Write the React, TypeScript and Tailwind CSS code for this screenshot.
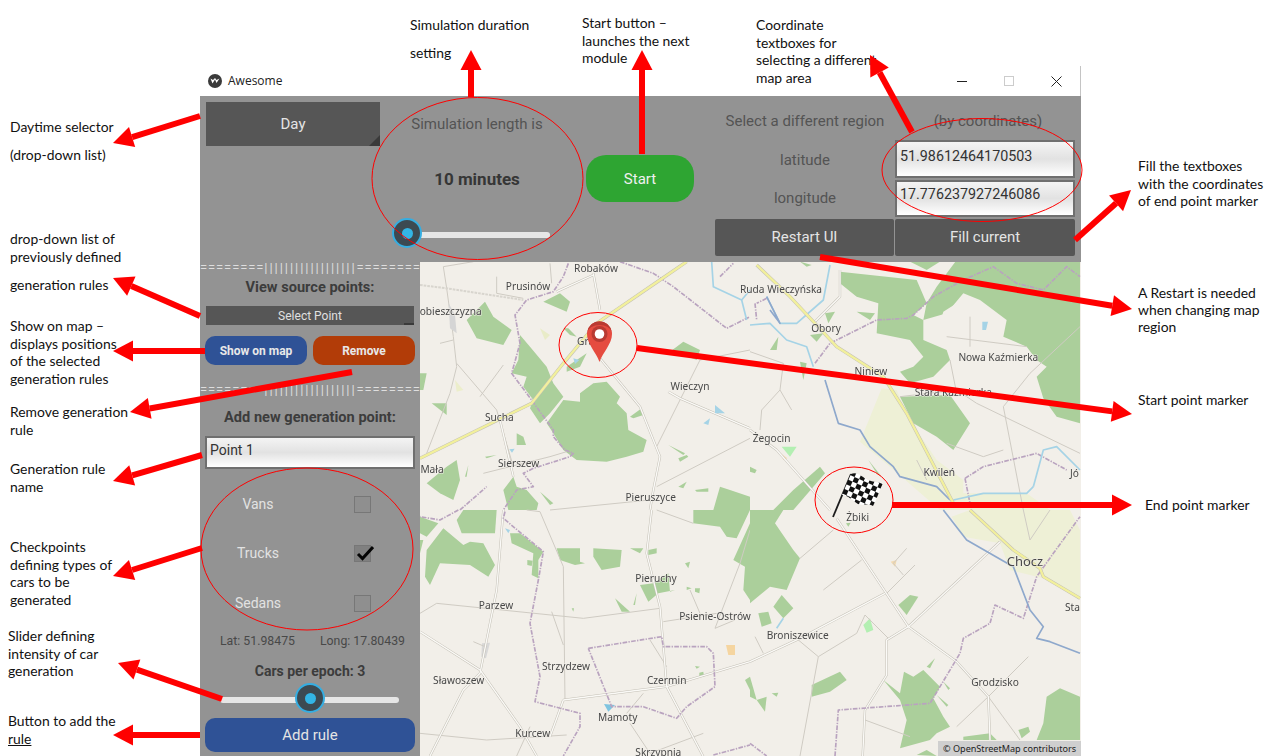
import type { ReactNode } from "react";

const FOREST = "#abcf9b";

function Forest({ d }: { d: string[] }) {
  return (
    <g fill={FOREST}>
      {d.map((p, i) => (
        <polygon key={i} points={p} />
      ))}
    </g>
  );
}

// two layer line, grey casing + white or yellow core
function Roads({ d, core, w }: { d: string[]; core: string; w: number }) {
  return (
    <g fill="none" strokeLinejoin="round">
      {d.map((p, i) => (
        <polyline key={i} points={p} stroke="#c4c0b6" strokeWidth={w + 3} />
      ))}
      {d.map((p, i) => (
        <polyline key={i} points={p} stroke={core} strokeWidth={w} />
      ))}
    </g>
  );
}

function Lines({ d, color, w, dash }: { d: string[]; color: string; w: number; dash?: string }) {
  return (
    <g fill="none" stroke={color} strokeWidth={w} strokeDasharray={dash} strokeLinejoin="round">
      {d.map((p, i) => (
        <polyline key={i} points={p} />
      ))}
    </g>
  );
}

function Label({ x, y, children, size = 30.5, anchor = "middle" }: { x: number; y: number; children: string; size?: number; anchor?: "middle" | "end" | "start" }) {
  return (
    <text x={x} y={y + size * 0.36} fontSize={size} textAnchor={anchor} fill="#484848" stroke="#f2efe9" strokeWidth={3} paintOrder="stroke" fontFamily="'Noto Sans', sans-serif">
      {children}
    </text>
  );
}

const THIN = "#cfcbc3";
const BOUNDARY = "#b9a3bf";
const RIVER = "#a5d3e6";
const RIVER_DARK = "#8ea8cc";
const MINOR = "#fbfaf7";
const MAIN = "#f2f09c";

function MapTileA() {
  return (
    <g transform="translate(420 260) scale(0.33333)">
      <Forest
        d={[
          "480,400 520,370 560,365 600,410 590,430 620,460 625,510 680,540 670,575 620,590 560,605 470,600 430,570 400,520 380,490 430,420 480,425",
          "300,225 330,260 380,320 400,370 430,410 390,460 360,490 330,445 340,420 310,380 320,350 275,340 295,300",
          "140,180 195,125 220,170 275,210 250,255 170,235",
          "370,125 420,100 450,125 440,155",
          "430,205 445,205 470,230 450,225",
          "440,320 500,280 480,320 440,335",
          "750,275 790,245 840,270 830,300 790,285",
          "20,670 80,620 110,600 120,660 100,720 60,700",
          "0,340 20,340 10,390 0,390",
          "35,430 80,430 80,465",
          "290,520 310,530 318,555 290,555",
          "250,690 280,650 290,680 320,690 355,730 350,750 265,750",
          "880,750 900,680 930,690 990,710 990,750",
          "825,690 865,685 865,695 830,695",
          "135,650 145,615 140,650",
          "195,590 230,585 200,595",
          "630,470 665,445 670,465 640,475",
          "745,555 795,580 790,585",
          "775,595 800,585 805,590 780,605",
          "360,695 400,730 390,735",
          "775,680 800,665 790,685",
        ]}
      />
      <polygon points="360,205 390,225 375,240" fill="#e9ecc8" />
      <polygon points="105,360 130,390 110,395" fill="#eceecb" />
      <Lines
        d={[
          "80,85 100,230 110,320 90,400 20,580",
          "110,310 230,450 280,620",
          "840,300 780,420 710,560",
          "990,535 710,680",
          "230,50 230,100 310,115",
          "390,10 395,70",
          "70,20 80,85",
          "70,20 160,5",
          "190,640 390,590 440,575",
          "60,250 100,240",
          "180,410 250,315",
          "390,750 690,720",
          "840,300 990,270",
        ]}
        color={THIN}
        w={3}
      />
      <Roads d={["520,40 540,150", "540,295 660,440 720,590 700,690 690,750", "780,415 990,505", "745,395 780,415", "410,95 520,45", "240,480 280,650"]} core={MINOR} w={4} />
      <Lines d={["0,75 80,85 310,120"]} color="#d8d5ce" w={6} dash="8 3" />
      <Lines
        d={[
          "445,10 430,50 400,95 320,120 285,165 300,250 275,340 320,400 400,510 400,530 435,570 460,580 450,590 340,625 310,640 340,680 290,690 250,750",
          "600,5 700,40 760,80 920,205 990,170",
          "900,50 940,10",
          "120,750 200,680",
        ]}
        color={BOUNDARY}
        w={5}
        dash="14 4 4 4"
      />
      <Lines d={["875,5 880,80 965,120 980,180", "965,120 990,90"]} color={RIVER} w={5} />
      <polygon points="885,435 915,460 885,460" fill={RIVER} />
      <polygon points="850,490 870,475 865,495" fill={RIVER} />
      <polygon points="460,295 478,300 465,312" fill={RIVER} />
      <polygon points="268,568 284,566 276,578" fill={RIVER} />
      <polygon points="86,130 105,165 110,220 90,205" fill="#d5d5d5" />
      <Roads d={["0,595 335,430 430,310 530,190 720,60 800,5"]} core={MAIN} w={7} />
      <Label x={528} y={25}>Robaków</Label>
      <Label x={324} y={78}>Prusinów</Label>
      <Label x={185} y={155} anchor="end">obieszczyzna</Label>
      <Label x={497} y={243}>Gra</Label>
      <Label x={810} y={378}>Wieczyn</Label>
      <Label x={238} y={473}>Sucha</Label>
      <Label x={296} y={611}>Sierszew</Label>
      <Label x={36} y={628}>Mała</Label>
      <Label x={692} y={713}>Pieruszyce</Label>
    </g>
  );
}

function MapTileB() {
  return (
    <g transform="translate(750 260) scale(0.33333)">
      <polygon points="330,545 395,385 440,390 480,480 560,600 640,660 640,700 830,700 900,750 570,750 420,620" fill="#eef0d6" />
      <Forest
        d={[
          "620,0 990,0 990,490 920,470 880,415 860,350 890,320 860,300 830,260 760,230 770,180 690,120 640,100 590,160 520,180 530,130 560,80",
          "270,35 500,60 530,130 490,165 520,180 520,240 590,270 600,300 550,350 480,370 450,335 490,320 520,290 480,240 380,220 385,130 320,110 270,70",
          "450,410 600,405 660,490 610,570 560,530 490,490",
          "150,5 185,15 170,20",
          "480,5 570,5 530,30",
          "60,270 85,230 80,270",
          "180,225 220,220 200,245",
          "70,750 130,690 210,620 225,640 130,750",
          "0,620 20,630 15,640 0,635",
          "225,160 255,155 235,190",
          "150,305 170,310 160,360",
          "320,155 375,160 360,180",
          "355,600 395,650 380,640",
        ]}
      />
      <polygon points="95,560 140,560 120,590" fill="#b3efb2" />
      <polygon points="92,580 112,595 100,600" fill="#f2d9b0" />
      <g fill="#f2efe9">
        <polygon points="695,185 715,185 710,210 697,210" />
        <polygon points="580,155 620,130 640,190 600,240 570,190" />
        <polygon points="640,130 680,130 670,170 645,170" />
      </g>
      <polygon points="697,185 714,185 708,210 697,210" fill={RIVER} />
      <Lines
        d={[
          "0,275 100,310 90,390 35,450 30,510",
          "90,390 125,450",
          "760,440 820,750",
          "760,440 840,340 990,200",
          "680,430 990,580",
          "450,410 620,390 680,430",
          "600,300 620,400",
          "590,550 700,590 760,570",
          "660,170 660,260",
          "590,230 830,260",
          "500,600 530,660",
        ]}
        color={THIN}
        w={3}
      />
      <Roads d={["0,510 80,570 240,750", "270,30 270,110 190,190"]} core={MINOR} w={4} />
      <Lines
        d={[
          "15,130 20,180",
          "50,115 20,130",
          "195,310 240,250 280,230 380,180 470,175 490,165 550,110 640,60 730,20 800,70 880,90 950,20 990,50",
          "645,655 700,620 860,580 950,630",
          "645,655 660,730",
        ]}
        color={BOUNDARY}
        w={5}
        dash="14 4 4 4"
      />
      <Lines d={["0,195 60,190 110,240 170,260 190,320", "850,680 880,570 920,560 990,630", "610,720 700,700 830,700 850,680", "240,15 220,120 140,190 90,190 50,110"]} color={RIVER} w={5} />
      <Lines d={["225,360 265,490 330,510 360,560 430,620 450,650 560,680 600,720", "50,110 90,190 60,150"]} color={RIVER_DARK} w={5} />
      <Roads d={["20,15 120,110 260,260 400,350 470,460 610,730"]} core={MAIN} w={7} />
      <Label x={93} y={88}>Ruda Wieczyńska</Label>
      <Label x={228} y={204}>Obory</Label>
      <Label x={363} y={334}>Niniew</Label>
      <Label x={745} y={292}>Nowa Kaźmierka</Label>
      <Label x={610} y={396}>Stara Kaźmierka</Label>
      <Label x={65} y={535}>Żegocin</Label>
      <Label x={568} y={637}>Kwileń</Label>
      <Label x={960} y={640} anchor="start">Jó</Label>
    </g>
  );
}

function MapTileC() {
  return (
    <g transform="translate(420 510) scale(0.33333)">
      <Forest
        d={[
          "110,30 130,0 230,0 225,70 125,70",
          "15,200 20,120 70,55 130,105 150,95 190,100 225,165 205,200 150,165 60,160 30,225",
          "270,70 300,70 370,125 355,150 355,205 335,195 340,130 275,100",
          "410,115 480,115 480,155 495,160 465,165 420,150",
          "520,115 605,120 600,170 545,180 520,140",
          "630,115 670,115 660,130",
          "685,120 710,115 710,130 685,135",
          "660,225 700,220 745,190 750,245 765,240 715,250 685,275",
          "585,265 630,305 605,305",
          "640,285 650,250 645,285",
          "795,160 810,155 805,175",
          "820,0 990,0 950,85 920,80 900,50 820,40",
          "940,150 990,40 990,270 970,240 975,170",
          "0,20 55,40 20,80 0,70",
          "0,90 10,90 0,130",
          "975,510 990,500 990,540",
          "800,230 815,235 800,240",
          "825,235 840,235 838,250 825,245",
          "825,468 840,470 830,476",
          "838,488 850,485 852,500 838,500",
          "322,150 338,152 335,168 322,165",
          "455,295 462,295 460,305",
        ]}
      />
      <polygon points="918,405 945,405 945,435 925,435" fill="#f5d5a0" />
      <polygon points="552,582 585,585 565,605" fill="#7fc4e0" />
      <polygon points="255,55 270,60 265,70" fill={RIVER} />
      <polygon points="186,400 210,398 198,445 184,440" fill="#d8d8d8" />
      <Lines
        d={[
          "320,0 360,5 430,170 435,570",
          "0,310 50,280 490,325 720,295",
          "0,670 200,690 440,675",
          "395,305 430,405",
          "730,335 890,310",
          "885,355 960,160 990,60",
          "885,355 945,330",
          "810,240 840,310",
          "630,640 690,730",
          "670,550 620,610",
          "690,390 740,470",
          "710,0 820,40",
          "690,730 850,670",
          "290,738 330,650",
          "160,395 195,410",
        ]}
        color={THIN}
        w={3}
      />
      <Roads d={["695,0 680,130 720,290 740,530 850,740", "0,365 180,480 300,650 350,738", "250,0 230,240 180,490 130,540 30,738", "430,570 660,540 740,530 990,455", "430,570 390,680"]} core={MINOR} w={4} />
      <Lines
        d={[
          "255,5 250,25 370,125 355,210 330,340 360,500 345,575 480,610 480,650 430,738",
          "505,415 725,380 730,410 860,410 880,430 885,530 800,590 770,625 670,590 575,590 505,415",
          "115,0 60,30 0,20",
          "880,735 990,705",
        ]}
        color={BOUNDARY}
        w={5}
        dash="14 4 4 4"
      />
      <Label x={708} y={205}>Pieruchy</Label>
      <Label x={228} y={287}>Parzew</Label>
      <Label x={885} y={320}>Psienie-Ostrów</Label>
      <Label x={438} y={470}>Strzydzew</Label>
      <Label x={116} y={512}>Sławoszew</Label>
      <Label x={740} y={511}>Czermin</Label>
      <Label x={593} y={622}>Mamoty</Label>
      <Label x={338} y={669}>Kurcew</Label>
      <Label x={715} y={726}>Skrzypnia</Label>
    </g>
  );
}

function MapTileD() {
  return (
    <g transform="translate(750 510) scale(0.33333)">
      <polygon points="605,20 660,0 960,0 990,60 990,270 900,210 780,180 750,100 640,80" fill="#eef0d6" />
      <Forest
        d={[
          "0,0 100,0 75,40 130,120 150,145 110,240 60,230 0,280",
          "70,290 95,255 130,295 100,325",
          "25,310 55,305 65,340 35,350",
          "445,285 480,255 505,260 470,315",
          "462,485 490,500 520,480 570,530 550,565 580,620 600,650 560,670 540,690 450,715 470,630 450,570 400,510 450,550",
          "185,525 270,485 290,510 240,545 185,560",
          "880,640 890,560 930,535 990,560 990,690 860,690",
          "805,660 835,650 840,665 815,685",
          "530,470 555,445 540,475",
          "640,680 720,670 740,690 640,690",
          "500,735 530,720 560,738",
          "0,500 20,570 0,560",
          "20,570 50,560 45,605",
          "65,550 85,548 80,560",
          "580,515 600,535 595,540",
          "560,555 595,585 590,590",
          "288,40 302,38 295,50",
        ]}
      />
      <polygon points="340,345 360,325 370,360 350,368" fill="#b3efb2" />
      <polygon points="422,155 440,150 435,170" fill="#f2d9b0" />
      <Lines
        d={[
          "150,145 250,60",
          "220,240 335,150",
          "410,250 495,165",
          "430,160 470,115",
          "430,160 460,195",
          "145,390 205,440 320,370 345,315 415,385",
          "205,440 150,738",
          "15,380 40,430",
          "620,650 715,560 810,690",
          "715,560 835,440",
          "345,630 480,680",
          "820,0 840,90",
          "900,0 840,90",
        ]}
        color={THIN}
        w={3}
      />
      <Roads d={["260,25 475,350 620,455 715,560 720,690", "475,350 750,95", "0,455 150,385 405,250", "475,350 410,390 410,495 345,600 338,738"]} core={MINOR} w={4} />
      <Lines
        d={[
          "255,738 265,600 540,580 630,430 640,385 720,340 735,285 820,325 860,200 910,130 990,20",
          "0,700 50,738",
        ]}
        color={BOUNDARY}
        w={5}
        dash="14 4 4 4"
      />
      <Lines d={["580,0 650,90 790,170 840,300 880,350 860,385 900,395 990,430"]} color={RIVER_DARK} w={5} />
      <Lines d={["80,355 100,325"]} color={RIVER} w={5} />
      <Roads d={["660,0 790,120 870,175 880,200 990,265"]} core={MAIN} w={7} />
      <Label x={323} y={22}>Żbiki</Label>
      <Label x={825} y={155} size={39}>Chocz</Label>
      <Label x={143} y={377}>Broniszewice</Label>
      <Label x={735} y={516}>Grodzisko</Label>
      <Label x={945} y={293} anchor="start">Sta</Label>
    </g>
  );
}

function Arrow({ x1, y1, x2, y2 }: { x1: number; y1: number; x2: number; y2: number }) {
  const len = Math.hypot(x2 - x1, y2 - y1);
  const ux = (x2 - x1) / len;
  const uy = (y2 - y1) / len;
  const bx = x2 - ux * 20;
  const by = y2 - uy * 20;
  return (
    <g fill="#ff0000">
      <line x1={x1} y1={y1} x2={bx} y2={by} stroke="#ff0000" strokeWidth={6} />
      <polygon points={`${x2},${y2} ${bx - uy * 10.5},${by + ux * 10.5} ${bx + uy * 10.5},${by - ux * 10.5}`} />
    </g>
  );
}

const ARROWS = [
  [200, 116, 113, 143],
  [200, 316, 113, 278],
  [205, 351, 113, 351],
  [352, 372, 130, 412],
  [202, 455, 113, 481],
  [202, 548, 113, 576],
  [222, 699, 118, 663],
  [200, 735, 113, 735],
  [471, 97, 471, 50],
  [642, 154, 642, 50],
  [912, 132, 870, 55],
  [1075, 240, 1131, 190],
  [820, 257, 1132, 309],
  [637, 348, 1132, 414],
  [892, 505, 1132, 505],
];

function Overlay() {
  return (
    <svg className="absolute left-0 top-0 pointer-events-none" width={1271} height={756}>
      {/* start marker */}
      <path d="M599.5 362 C596 352 587 344 587 334 A12.5 12.5 0 0 1 612 334 C612 344 603 352 599.5 362 Z" fill="#e54b3f" />
      <path d="M587.3 332 A12.3 12.3 0 0 1 611.7 332 A12.3 8 0 0 0 587.3 332 Z" fill="#b93a32" />
      <circle cx={599.5} cy={334} r={8} fill="#b93a32" />
      <circle cx={599.5} cy={334} r={4.8} fill="#ffffff" />
      {/* end marker */}
      <line x1={833} y1={517} x2={851} y2={474} stroke="#1c1c1c" strokeWidth={1.8} />
      <defs>
        <pattern id="checks" width={10} height={10} patternUnits="userSpaceOnUse" patternTransform="rotate(24 850 475)">
          <rect width={10} height={10} fill="#ffffff" />
          <rect width={5} height={5} fill="#111111" />
          <rect x={5} y={5} width={5} height={5} fill="#111111" />
        </pattern>
      </defs>
      <path d="M851 474 C857 471 862 477 868 480 C873 482 878 482 883 483 C879 491 877 499 873 506 C868 503 863 506 858 504 C853 501 848 495 842 495 Z" fill="url(#checks)" />
      {ARROWS.map((a, i) => (
        <Arrow key={i} x1={a[0]} y1={a[1]} x2={a[2]} y2={a[3]} />
      ))}
      <g fill="none" stroke="#ff0000" strokeWidth={1}>
        <ellipse cx={477.5} cy={178.5} rx={105.5} ry={81} />
        <ellipse cx={982} cy={170} rx={100} ry={51.5} />
        <ellipse cx={307} cy={549} rx={106} ry={81} />
        <ellipse cx={598} cy={345} rx={39} ry={32.5} />
        <ellipse cx={854} cy={500} rx={39} ry={33} />
      </g>
    </svg>
  );
}

function Slider({ thumbClass, trackClass }: { thumbClass: string; trackClass: string }) {
  return (
    <div className="relative h-full w-full">
      <div className={`absolute h-[6px] rounded-sm bg-[#e6e6e6] ${trackClass}`} />
      <div className={`absolute flex h-[30px] w-[30px] items-center justify-center rounded-full border-2 border-[#35aee2] bg-[#3c4a52] ${thumbClass}`}>
        <div className="h-[11px] w-[11px] rounded-full bg-[#33b5e5]" />
      </div>
    </div>
  );
}

function Separator() {
  return (
    <div className="flex h-[12px] items-center justify-between whitespace-nowrap font-['Roboto',sans-serif] text-[13px] leading-[12px] text-[#dedede]">
      <span className="tracking-[0.9px]">========</span>
      <span className="tracking-[1.95px]">||||||||||||||||||</span>
      <span className="tracking-[0.9px]">========</span>
    </div>
  );
}

function TextBox({ value, className }: { value: string; className: string }) {
  return (
    <div className={`border-2 border-[#6f6f6f] bg-gradient-to-b from-[#f4f4f4] via-[#e2e2e2] to-white pl-[3px] text-[#333333] ${className}`}>
      {value}
    </div>
  );
}

function VehicleRow({ label, checked }: { label: string; checked?: boolean }) {
  return (
    <div className="grid h-[30px] grid-cols-[116px_92px] items-center">
      <span className="text-center text-[14px] text-[#e2e2e2]">{label}</span>
      <div className={`relative mx-auto h-[17px] w-[17px] border border-[#777777] ${checked ? "bg-[#808080]" : "bg-[#8f8f8f]"}`}>
        {checked && (
          <svg className="absolute -left-[1px] -top-[4px] blur-[0.4px]" width={20} height={20} viewBox="0 0 20 20">
            <path d="M4 12 L8.5 16.5 L19 5" fill="none" stroke="#050505" strokeWidth={3} />
          </svg>
        )}
      </div>
    </div>
  );
}

function Annotation({ className, children }: { className: string; children: ReactNode }) {
  return <div className={`absolute whitespace-nowrap font-['Lato',sans-serif] text-[13.9px] text-[#111111] ${className}`}>{children}</div>;
}

function Annotations() {
  return (
    <>
      <Annotation className="left-[10px] top-[113px] leading-[28px]">Daytime selector<br />(drop-down list)</Annotation>
      <Annotation className="left-[10px] top-[230px] leading-[17.5px]">drop-down list of<br />previously defined<div className="mt-[11px]">generation rules</div></Annotation>
      <Annotation className="left-[10px] top-[317px] leading-[17.6px]">Show on map –<br />displays positions<br />of the selected<br />generation rules</Annotation>
      <Annotation className="left-[10px] top-[403px] leading-[17.5px]">Remove generation<br />rule</Annotation>
      <Annotation className="left-[10px] top-[460px] leading-[17.5px]">Generation rule<br />name</Annotation>
      <Annotation className="left-[10px] top-[538px] leading-[17.6px]">Checkpoints<br />defining types of<br />cars to be<br />generated</Annotation>
      <Annotation className="left-[8px] top-[627px] leading-[17.5px]">Slider defining<br />intensity of car<br />generation</Annotation>
      <Annotation className="left-[8px] top-[712px] leading-[18px]">Button to add the<br /><span className="underline">rule</span></Annotation>
      <Annotation className="left-[410px] top-[11px] leading-[28px]">Simulation duration<br />setting</Annotation>
      <Annotation className="left-[582px] top-[14px] leading-[17.5px]">Start button –<br />launches the next<br />module</Annotation>
      <Annotation className="left-[756px] top-[16px] leading-[17.6px]">Coordinate<br />textboxes for<br />selecting a different<br />map area</Annotation>
      <Annotation className="left-[1138px] top-[157px] leading-[17.5px]">Fill the textboxes<br />with the coordinates<br />of end point marker</Annotation>
      <Annotation className="left-[1138px] top-[284px] leading-[17.2px]">A Restart is needed<br />when changing map<br />region</Annotation>
      <Annotation className="left-[1138px] top-[391px] leading-[18px]">Start point marker</Annotation>
      <Annotation className="left-[1145px] top-[496px] leading-[18px]">End point marker</Annotation>
    </>
  );
}

function TitleBar() {
  return (
    <div className="flex h-[30px] items-center border-r border-[#c4c4c4] bg-white pl-[8px] font-['Open_Sans',sans-serif] text-[12px] text-[#222222]">
      <div className="flex h-[14px] w-[14px] items-center justify-center rounded-full bg-[#3a3a3a]">
        <svg width={10} height={8} viewBox="0 0 10 8">
          <path d="M0.5 1.5 L2.5 6.5 L5 2.5 L6.5 6 L9.5 1.5 L6.5 3 L5 1 L3 3 Z" fill="#ffffff" />
        </svg>
      </div>
      <span className="ml-[6px]">Awesome</span>
      <div className="ml-auto flex items-center">
        <svg width={47} height={30} viewBox="0 0 47 30"><line x1={18} y1={15.5} x2={28} y2={15.5} stroke="#222222" /></svg>
        <svg width={47} height={30} viewBox="0 0 47 30"><rect x={18.5} y={10.5} width={9} height={9} fill="none" stroke="#cccccc" /></svg>
        <svg width={47} height={30} viewBox="0 0 47 30"><path d="M18.5 10.5 L28.5 20.5 M28.5 10.5 L18.5 20.5" stroke="#222222" /></svg>
      </div>
    </div>
  );
}

function Toolbar() {
  return (
    <div className="flex h-[166px] bg-[#939393]">
      <div className="w-[186px] pl-[6px] pt-[6px]">
        <div className="relative flex h-[44px] w-[174px] items-center justify-center bg-[#565656] text-[15px] text-[#e4e4e4]">
          Day
          <div className="absolute bottom-0 right-0 h-0 w-0 border-b-[11px] border-l-[11px] border-b-[#3a3a3a] border-l-transparent" />
        </div>
      </div>
      <div className="flex w-[182px] flex-col items-center">
        <div className="mt-[17px] h-[22px] text-[15px] leading-[22px] text-[#545454]">Simulation length is</div>
        <div className="mt-[32px] h-[24px] text-[17px] font-bold leading-[24px] text-[#363636]">10 minutes</div>
        <div className="mt-[27px] h-[30px] w-full">
          <Slider thumbClass="left-[6px] top-0" trackClass="left-[30px] right-[18px] top-[14px]" />
        </div>
      </div>
      <button className="ml-[18px] mt-[59px] h-[47px] w-[108px] rounded-[20px] bg-[#2ea532] pt-[1px] text-[15px] text-[#f0f0f0]">Start</button>
      <div className="ml-[21px] grid w-[360px] grid-cols-[180px_180px] grid-rows-[42px_38px_37px_37px] gap-y-[2px] text-[15px] text-[#545454]">
        <div className="self-end pb-[7px] text-center leading-[20px]">Select a different region</div>
        <div className="self-end pb-[7px] pl-[6px] text-center leading-[20px]">(by coordinates)</div>
        <div className="flex items-center justify-center pt-[3px]">latitude</div>
        <TextBox value="51.98612464170503" className="text-[14.3px] leading-[28px]" />
        <div className="flex items-center justify-center">longitude</div>
        <TextBox value="17.776237927246086" className="text-[14.3px] leading-[25px]" />
        <button className="mr-[1px] rounded-[2px] bg-[#565656] text-[#e4e4e4]">Restart UI</button>
        <button className="rounded-[2px] bg-[#565656] text-[#e4e4e4]">Fill current</button>
      </div>
    </div>
  );
}

function SidePanel() {
  return (
    <div className="flex w-[220px] shrink-0 flex-col bg-[#939393]">
      <Separator />
      <div className="mt-[3px] h-[20px] text-center text-[14.6px] font-bold leading-[20px] text-[#3c3c3c]">View source points:</div>
      <div className="relative mx-[6px] mt-[9px] flex h-[19px] items-center justify-center bg-[#565656] text-[12px] text-[#e0e0e0]">
        Select Point
        <div className="absolute bottom-0 right-0 h-[2px] w-[10px] bg-[#3a3a3a]" />
      </div>
      <div className="mx-[5px] mt-[11px] flex h-[29px] justify-between text-[12px] font-bold">
        <button className="w-[102px] rounded-[10px] bg-[#2f5296] text-[#e8e8e8]">Show on map</button>
        <button className="w-[102px] rounded-[10px] bg-[#b23c08] text-[#e8e8e8]">Remove</button>
      </div>
      <div className="mt-[19px]"><Separator /></div>
      <div className="mt-[11px] h-[20px] text-center text-[14.6px] font-bold leading-[20px] text-[#3c3c3c]">Add new generation point:</div>
      <TextBox value="Point 1" className="mx-[5px] mt-[9px] h-[33px] text-[14px] leading-[24px]" />
      <div className="mt-[20px]"><VehicleRow label="Vans" /></div>
      <div className="mt-[19px]"><VehicleRow label="Trucks" checked /></div>
      <div className="mt-[20px]"><VehicleRow label="Sedans" /></div>
      <div className="mt-[15px] flex h-[16px] text-[12.3px] leading-[16px] text-[#484848]">
        <span className="ml-[20px]">Lat: 51.98475</span>
        <span className="ml-[25px]">Long: 17.80439</span>
      </div>
      <div className="mt-[13px] h-[18px] text-center text-[14px] font-bold leading-[18px] text-[#3c3c3c]">Cars per epoch: 3</div>
      <div className="mt-[3px] h-[30px]">
        <Slider thumbClass="left-[95px] top-0" trackClass="left-[20px] right-[21px] top-[14px]" />
      </div>
      <button className="mx-[5px] mt-[5px] h-[34px] rounded-[10px] bg-[#2f5296] text-[15px] text-[#e4e4e4]">Add rule</button>
    </div>
  );
}

function MapView() {
  return (
    <div className="relative flex-1 overflow-hidden bg-[#f2efe9]">
      <svg className="block blur-[0.6px]" width={661} height={494} viewBox="420 262 661 494">
        <rect x={420} y={262} width={661} height={494} fill="#f2efe9" />
        <MapTileA />
        <MapTileB />
        <MapTileC />
        <MapTileD />
      </svg>
      <div className="absolute bottom-0 right-0 h-[15px] w-[143px] whitespace-nowrap bg-[#cfcfcf] pl-[5px] font-['Noto_Sans',sans-serif] text-[9.1px] leading-[15px] text-[#222222]">
        © OpenStreetMap contributors
      </div>
    </div>
  );
}

export default function App() {
  return (
    <div className="relative h-[756px] w-[1271px] overflow-hidden bg-white font-['Roboto',sans-serif]">
      <div className="absolute left-[200px] top-[66px] flex h-[690px] w-[881px] flex-col">
        <TitleBar />
        <Toolbar />
        <div className="flex flex-1">
          <SidePanel />
          <MapView />
        </div>
      </div>
      <Annotations />
      <Overlay />
    </div>
  );
}
